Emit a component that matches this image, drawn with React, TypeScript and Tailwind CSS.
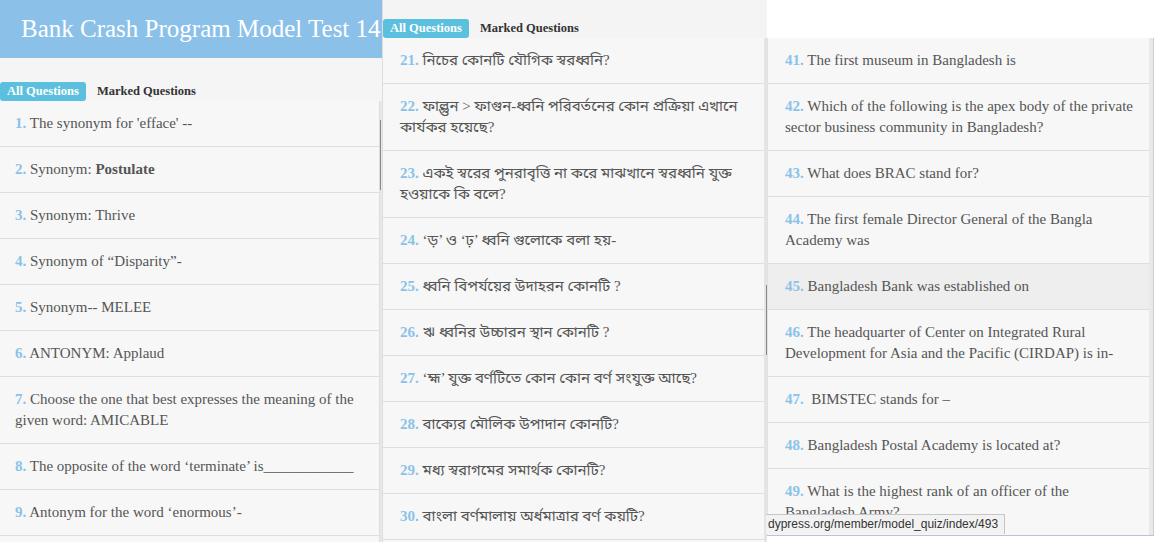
import React from "react";

type Q = { n: number; text: React.ReactNode; hover?: boolean };

const englishA: Q[] = [
  { n: 1, text: "The synonym for 'efface' --" },
  { n: 2, text: <>Synonym: <b>Postulate</b></> },
  { n: 3, text: "Synonym: Thrive" },
  { n: 4, text: "Synonym of \u201CDisparity\u201D-" },
  { n: 5, text: "Synonym-- MELEE" },
  { n: 6, text: "ANTONYM: Applaud" },
  { n: 7, text: "Choose the one that best expresses the meaning of the given word: AMICABLE" },
  { n: 8, text: "The opposite of the word \u2018terminate\u2019 is____________" },
  { n: 9, text: "Antonym for the word \u2018enormous\u2019-" },
  { n: 10, text: "Choose the correct antonym" },
];

const bangla: Q[] = [
  { n: 21, text: "নিচের কোনটি যৌগিক স্বরধ্বনি?" },
  { n: 22, text: "ফাল্গুন > ফাগুন-ধ্বনি পরিবর্তনের কোন প্রক্রিয়া এখানে কার্যকর হয়েছে?" },
  { n: 23, text: "একই স্বরের পুনরাবৃত্তি না করে মাঝখানে স্বরধ্বনি যুক্ত হওয়াকে কি বলে?" },
  { n: 24, text: "‘ড়’ ও ‘ঢ়’ ধ্বনি গুলোকে বলা হয়-" },
  { n: 25, text: "ধ্বনি বিপর্যয়ের উদাহরন কোনটি ?" },
  { n: 26, text: "ঋ ধ্বনির উচ্চারন স্থান কোনটি ?" },
  { n: 27, text: "‘হ্ম’ যুক্ত বর্ণটিতে কোন কোন বর্ণ সংযুক্ত আছে?" },
  { n: 28, text: "বাক্যের মৌলিক উপাদান কোনটি?" },
  { n: 29, text: "মধ্য স্বরাগমের সমার্থক কোনটি?" },
  { n: 30, text: "বাংলা বর্ণমালায় অর্ধমাত্রার বর্ণ কয়টি?" },
];

const englishB: Q[] = [
  { n: 41, text: "The first museum in Bangladesh is" },
  { n: 42, text: "Which of the following is the apex body of the private sector business community in Bangladesh?" },
  { n: 43, text: "What does BRAC stand for?" },
  { n: 44, text: "The first female Director General of the Bangla Academy was" },
  { n: 45, text: "Bangladesh Bank was established on", hover: true },
  { n: 46, text: "The headquarter of Center on Integrated Rural Development for Asia and the Pacific (CIRDAP) is in-" },
  { n: 47, text: "\u00A0BIMSTEC stands for \u2013" },
  { n: 48, text: "Bangladesh Postal Academy is located at?" },
  { n: 49, text: "What is the highest rank of an officer of the Bangladesh Army?" },
];

const serif = "font-['Liberation_Serif','Noto_Sans_Bengali','Noto_Serif_Bengali',serif]";

function Tabs() {
  return (
    <div className="flex items-center h-[19px]">
      <span className="h-[19px] px-[7px] rounded-[3px] bg-[#5bc0de] text-white text-[12.5px] font-bold leading-[19px]">
        All Questions
      </span>
      <span className="ml-[11px] text-[12.5px] font-bold text-[#333]">Marked Questions</span>
    </div>
  );
}

function QuestionList({ items, pad }: { items: Q[]; pad: string }) {
  return (
    <ul className="flex-1 bg-[#f7f7f7] overflow-hidden">
      {items.map((q) => (
        <li
          key={q.n}
          className={`${pad} py-3 border-b border-[#dedede] text-[15px] leading-[21px] text-[#555] ${
            q.hover ? "bg-[#eeeeee]" : ""
          }`}
        >
          <span className="font-bold text-[#8ac2ea]">{q.n}.</span> {q.text}
        </li>
      ))}
    </ul>
  );
}

export default function App() {
  return (
    <div className={`${serif} flex h-[542px] w-[1154px] overflow-hidden bg-white`}>
      {/* first screenshot */}
      <div className="w-[382px] shrink-0 flex flex-col">
        <div className="h-[58px] bg-[#8bc1e9] pl-[21px] text-[25px] leading-[58px] text-white whitespace-nowrap overflow-hidden">
          Bank Crash Program Model Test 14
        </div>
        <div className="h-[43px] bg-[#f5f5f5] flex items-end">
          <Tabs />
        </div>
        <div className="flex-1 flex min-h-0">
          <QuestionList items={englishA} pad="px-[15px]" />
          <div className="w-[3px] bg-[#e8e8e8] border-l border-[#dddddd] pt-[19px]">
            <div className="h-[70px] w-[1px] bg-[#888]" />
          </div>
        </div>
      </div>

      {/* second screenshot */}
      <div className="w-[385px] shrink-0 flex flex-col border-l border-[#dddddd]">
        <div className="h-[38px] bg-[#f4f4f4] flex items-end">
          <Tabs />
        </div>
        <div className="flex-1 flex min-h-0">
          <QuestionList items={bangla} pad="px-[17px]" />
          <div className="w-[3px] bg-[#e4e4e4] flex justify-end pt-[247px]">
            <div className="h-[70px] w-[1px] bg-[#888]" />
          </div>
        </div>
      </div>

      {/* third screenshot */}
      <div className="relative w-[387px] shrink-0 flex flex-col">
        <div className="h-[38px] bg-white" />
        <div className="h-[497px] flex border-l border-[#e2e2e2]">
          <QuestionList items={englishB} pad="pl-[17px] pr-[8px]" />
          <div className="w-[5px] bg-[#e9e9e9] border-r border-[#c8d0dc]" />
        </div>
        <div className="h-[7px] border-t border-[#b8c4d4] bg-white" />
        <div className="absolute left-[-1px] top-[514px] h-[20px] w-[239px] bg-[#f2f2f2] border-t border-r border-[#c6c6c6] pl-[2px] font-['Liberation_Sans',sans-serif] text-[12px] leading-[19px] text-[#333]">
          dypress.org/member/model_quiz/index/493
        </div>
      </div>
    </div>
  );
}
